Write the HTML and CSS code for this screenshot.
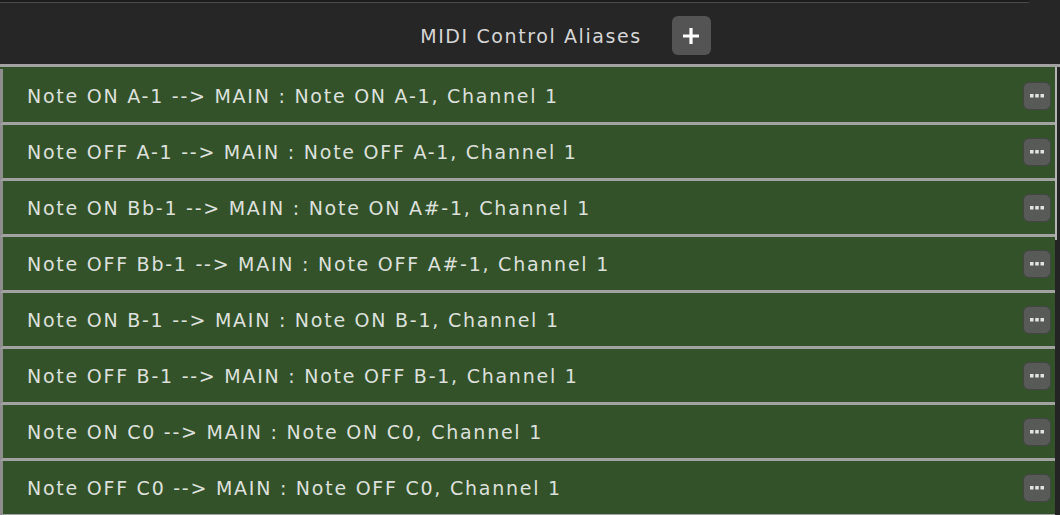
FILE: index.html
```html
<!DOCTYPE html>
<html lang="en">
<head>
    <meta charset="UTF-8">
    <meta name="viewport" content="width=device-width, initial-scale=1.0">
    <title>MIDI Control Aliases</title>
    <link rel="stylesheet" href="styles.css">
</head>
<body>

    <div class="top-panel"></div>

    <div class="header">
        <span></span>
        <h2>MIDI Control Aliases</h2>
        <button class="add-btn" title="Add alias">
            <svg width="18" height="18" viewBox="0 0 18 18">
                <path d="M9 1v16M1 9h16" stroke="#ffffff" stroke-width="3.2"/>
            </svg>
        </button>
    </div>

    <div class="list-wrap">
        <div class="list">
            <div class="row"><span>Note ON A-1 --&gt; MAIN : Note ON A-1, Channel 1</span><button class="more"><svg width="14" height="4" viewBox="0 0 14 4"><rect x="0" y="0" width="3.5" height="3.5"/><rect x="5.25" y="0" width="3.5" height="3.5"/><rect x="10.5" y="0" width="3.5" height="3.5"/></svg></button></div>
            <div class="row"><span>Note OFF A-1 --&gt; MAIN : Note OFF A-1, Channel 1</span><button class="more"><svg width="14" height="4" viewBox="0 0 14 4"><rect x="0" y="0" width="3.5" height="3.5"/><rect x="5.25" y="0" width="3.5" height="3.5"/><rect x="10.5" y="0" width="3.5" height="3.5"/></svg></button></div>
            <div class="row"><span>Note ON Bb-1 --&gt; MAIN : Note ON A#-1, Channel 1</span><button class="more"><svg width="14" height="4" viewBox="0 0 14 4"><rect x="0" y="0" width="3.5" height="3.5"/><rect x="5.25" y="0" width="3.5" height="3.5"/><rect x="10.5" y="0" width="3.5" height="3.5"/></svg></button></div>
            <div class="row"><span>Note OFF Bb-1 --&gt; MAIN : Note OFF A#-1, Channel 1</span><button class="more"><svg width="14" height="4" viewBox="0 0 14 4"><rect x="0" y="0" width="3.5" height="3.5"/><rect x="5.25" y="0" width="3.5" height="3.5"/><rect x="10.5" y="0" width="3.5" height="3.5"/></svg></button></div>
            <div class="row"><span>Note ON B-1 --&gt; MAIN : Note ON B-1, Channel 1</span><button class="more"><svg width="14" height="4" viewBox="0 0 14 4"><rect x="0" y="0" width="3.5" height="3.5"/><rect x="5.25" y="0" width="3.5" height="3.5"/><rect x="10.5" y="0" width="3.5" height="3.5"/></svg></button></div>
            <div class="row"><span>Note OFF B-1 --&gt; MAIN : Note OFF B-1, Channel 1</span><button class="more"><svg width="14" height="4" viewBox="0 0 14 4"><rect x="0" y="0" width="3.5" height="3.5"/><rect x="5.25" y="0" width="3.5" height="3.5"/><rect x="10.5" y="0" width="3.5" height="3.5"/></svg></button></div>
            <div class="row"><span>Note ON C0 --&gt; MAIN : Note ON C0, Channel 1</span><button class="more"><svg width="14" height="4" viewBox="0 0 14 4"><rect x="0" y="0" width="3.5" height="3.5"/><rect x="5.25" y="0" width="3.5" height="3.5"/><rect x="10.5" y="0" width="3.5" height="3.5"/></svg></button></div>
            <div class="row"><span>Note OFF C0 --&gt; MAIN : Note OFF C0, Channel 1</span><button class="more"><svg width="14" height="4" viewBox="0 0 14 4"><rect x="0" y="0" width="3.5" height="3.5"/><rect x="5.25" y="0" width="3.5" height="3.5"/><rect x="10.5" y="0" width="3.5" height="3.5"/></svg></button></div>
        </div>
        <div class="scrollbar">
            <div class="thumb"></div>
        </div>
    </div>

</body>
</html>
```

FILE: styles.css
```css
body {
    font-family: "DejaVu Sans", Verdana, sans-serif;
    background-color: #262626;
    margin: 0;
    padding: 0;
    height: 515px;
    overflow: hidden;
}

.top-panel {
    width: 1030px;
    height: 2px;
    background-color: #1c1c1c;
    border-bottom: 1px solid #4a4a4a;
    border-bottom-right-radius: 6px;
}

.header {
    height: 61px;
    display: grid;
    grid-template-columns: 1fr auto 1fr;
    align-items: center;
    box-sizing: border-box;
    padding-top: 4px;
}

.header h2 {
    margin: 0;
    font-size: 19px;
    font-weight: normal;
    letter-spacing: 1.6px;
    color: #d6d6d6;
    padding-left: 2px;
}

.add-btn {
    justify-self: start;
    margin-left: 30px;
    width: 39px;
    height: 39px;
    padding: 0;
    border: none;
    border-radius: 6px;
    background-color: #545454;
    display: flex;
    align-items: center;
    justify-content: center;
    cursor: pointer;
}

.list-wrap {
    display: flex;
    border-top: 3px solid #a2a2a2;
}

.list {
    flex: 1;
    background-color: #33522a;
    padding-top: 2px;
}

.row {
    height: 53px;
    display: flex;
    align-items: center;
    justify-content: space-between;
    border-left: 3px solid #8e8e8e;
    border-bottom: 3px solid #a2a2a2;
    padding-left: 24px;
    padding-right: 4px;
    background-color: #33522a;
    color: #dde0dc;
    font-size: 19px;
    letter-spacing: 1.75px;
    white-space: nowrap;
}

.more {
    width: 28px;
    height: 28px;
    padding: 0;
    border: 1px solid #434643;
    border-radius: 6px;
    background-color: #585a58;
    display: flex;
    align-items: center;
    justify-content: center;
    cursor: pointer;
}

.more svg {
    fill: #e2e4e2;
}

.scrollbar {
    width: 5px;
    background-color: #242424;
}

.thumb {
    width: 2px;
    height: 173px;
    background-color: #b4b4b4;
}
```
